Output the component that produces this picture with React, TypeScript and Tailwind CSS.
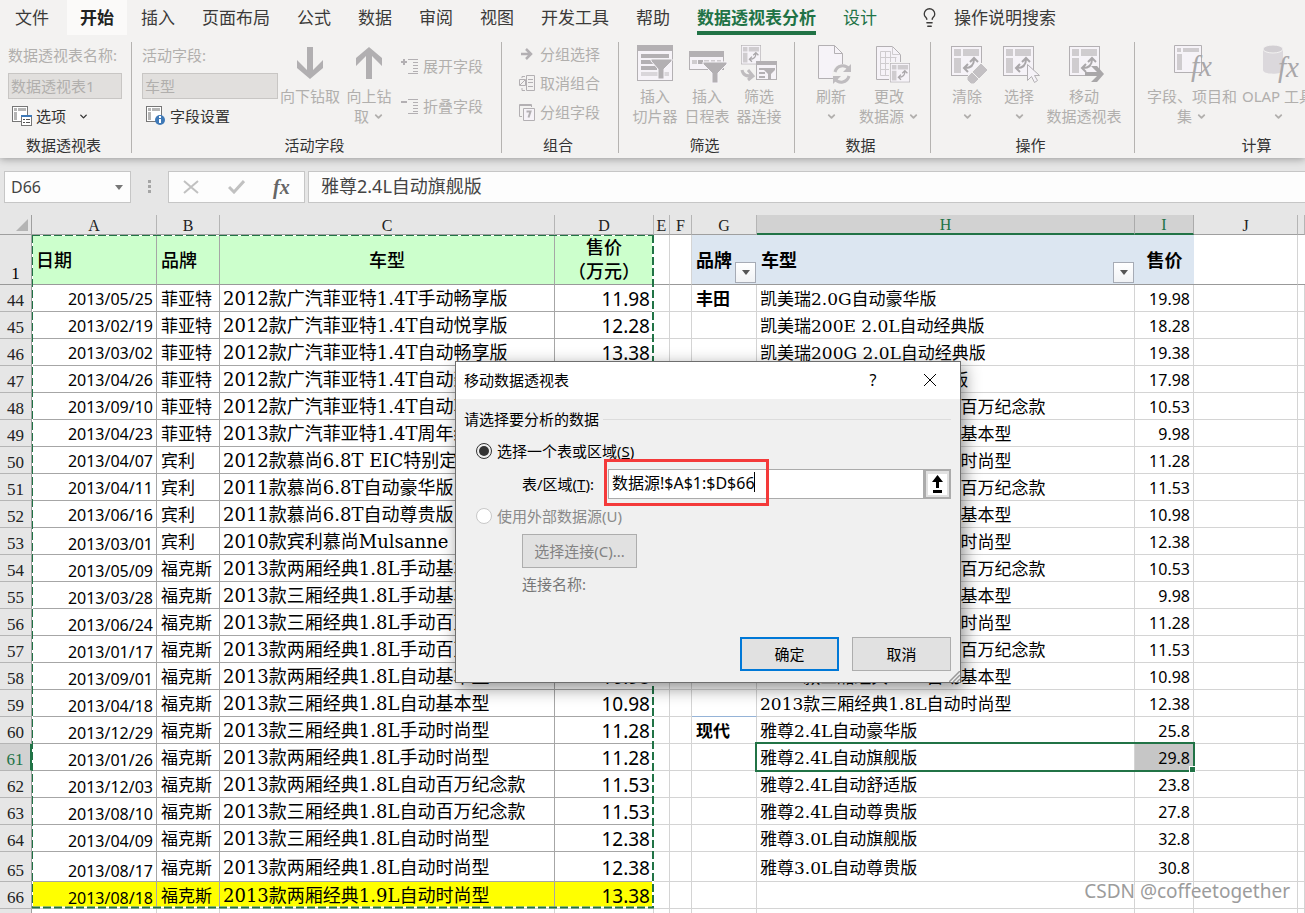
import type { ReactNode } from 'react';
import { ChevronDown, Lightbulb } from 'lucide-react';
import clsx from 'clsx';

const TABS = ['文件', '开始', '插入', '页面布局', '公式', '数据', '审阅', '视图', '开发工具', '帮助', '数据透视表分析', '设计'];

type Row = {
  no: number;
  date: string;
  brand: string;
  model: string;
  price: string;
  group?: string;
  item: string;
  sum: string;
};

const ROWS: Row[] = [
  { no: 44, date: '2013/05/25', brand: '菲亚特', model: '2012款广汽菲亚特1.4T手动畅享版', price: '11.98', group: '丰田', item: '凯美瑞2.0G自动豪华版', sum: '19.98' },
  { no: 45, date: '2013/02/19', brand: '菲亚特', model: '2012款广汽菲亚特1.4T自动悦享版', price: '12.28', item: '凯美瑞200E 2.0L自动经典版', sum: '18.28' },
  { no: 46, date: '2013/03/02', brand: '菲亚特', model: '2012款广汽菲亚特1.4T自动畅享版', price: '13.38', item: '凯美瑞200G 2.0L自动经典版', sum: '19.38' },
  { no: 47, date: '2013/04/26', brand: '菲亚特', model: '2012款广汽菲亚特1.4T自动劲享版', price: '14.28', item: '凯美瑞2.0L自动真皮导航版', sum: '17.98' },
  { no: 48, date: '2013/09/10', brand: '菲亚特', model: '2012款广汽菲亚特1.4T自动享乐版', price: '15.58', item: '2013款两厢经典1.8L手动百万纪念款', sum: '10.53' },
  { no: 49, date: '2013/04/23', brand: '菲亚特', model: '2013款广汽菲亚特1.4T周年纪念版', price: '13.38', item: '2013款两厢经典1.8L手动基本型', sum: '9.98' },
  { no: 50, date: '2013/04/07', brand: '宾利', model: '2012款慕尚6.8T EIC特别定制版', price: '598', item: '2013款两厢经典1.8L手动时尚型', sum: '11.28' },
  { no: 51, date: '2013/04/11', brand: '宾利', model: '2011款慕尚6.8T自动豪华版', price: '548', item: '2013款两厢经典1.8L自动百万纪念款', sum: '11.53' },
  { no: 52, date: '2013/06/16', brand: '宾利', model: '2011款慕尚6.8T自动尊贵版', price: '568', item: '2013款两厢经典1.8L自动基本型', sum: '10.98' },
  { no: 53, date: '2013/03/01', brand: '宾利', model: '2010款宾利慕尚Mulsanne 758', price: '758', item: '2013款两厢经典1.8L自动时尚型', sum: '12.38' },
  { no: 54, date: '2013/05/09', brand: '福克斯', model: '2013款两厢经典1.8L手动基本型', price: '9.98', item: '2013款三厢经典1.8L手动百万纪念款', sum: '10.53' },
  { no: 55, date: '2013/03/28', brand: '福克斯', model: '2013款三厢经典1.8L手动基本型', price: '9.98', item: '2013款三厢经典1.8L手动基本型', sum: '9.98' },
  { no: 56, date: '2013/06/24', brand: '福克斯', model: '2013款三厢经典1.8L手动百万纪念款', price: '10.53', item: '2013款三厢经典1.8L手动时尚型', sum: '11.28' },
  { no: 57, date: '2013/01/17', brand: '福克斯', model: '2013款两厢经典1.8L手动百万纪念款', price: '10.53', item: '2013款三厢经典1.8L自动百万纪念款', sum: '11.53' },
  { no: 58, date: '2013/09/01', brand: '福克斯', model: '2013款两厢经典1.8L自动基本型', price: '10.98', item: '2013款三厢经典1.8L自动基本型', sum: '10.98' },
  { no: 59, date: '2013/04/18', brand: '福克斯', model: '2013款三厢经典1.8L自动基本型', price: '10.98', item: '2013款三厢经典1.8L自动时尚型', sum: '12.38' },
  { no: 60, date: '2013/12/29', brand: '福克斯', model: '2013款三厢经典1.8L手动时尚型', price: '11.28', group: '现代', item: '雅尊2.4L自动豪华版', sum: '25.8' },
  { no: 61, date: '2013/01/26', brand: '福克斯', model: '2013款两厢经典1.8L手动时尚型', price: '11.28', item: '雅尊2.4L自动旗舰版', sum: '29.8' },
  { no: 62, date: '2013/12/03', brand: '福克斯', model: '2013款两厢经典1.8L自动百万纪念款', price: '11.53', item: '雅尊2.4L自动舒适版', sum: '23.8' },
  { no: 63, date: '2013/08/10', brand: '福克斯', model: '2013款三厢经典1.8L自动百万纪念款', price: '11.53', item: '雅尊2.4L自动尊贵版', sum: '27.8' },
  { no: 64, date: '2013/04/09', brand: '福克斯', model: '2013款三厢经典1.8L自动时尚型', price: '12.38', item: '雅尊3.0L自动旗舰版', sum: '32.8' },
  { no: 65, date: '2013/08/17', brand: '福克斯', model: '2013款两厢经典1.8L自动时尚型', price: '12.38', item: '雅尊3.0L自动尊贵版', sum: '30.8' },
  { no: 66, date: '2013/08/18', brand: '福克斯', model: '2013款两厢经典1.9L自动时尚型', price: '13.38', item: '', sum: '' },
];

const SERIF = "font-['DejaVu_Serif','Noto_Sans_CJK_SC',serif]";
const HEAD = "font-['Liberation_Serif','Noto_Sans_CJK_SC',serif]";

/* ================= ICONS ================= */

function Pivot({ x = 0, y = 0, size = 31 }: { x?: number; y?: number; size?: number }) {
  return (
    <svg x={x} y={y} width={size} height={size} viewBox="0 0 31 31" fill="none">
      <rect x="0.5" y="0.5" width="30" height="29" fill="#f6f3f8" stroke="#b3b0b3" />
      <path d="M3 3h7v7H3zM12 3h16v7H12zM3 12h7v15H3z" fill="#cfcccf" />
      <path d="M14 22c6 0 9-3 9-9M19 16l4-4 4 4M17 18l-4 4 4 4" stroke="#aaa7aa" strokeWidth="2" />
    </svg>
  );
}

function Fx({ x, y }: { x: number; y: number }) {
  return (
    <text x={x} y={y} fontSize="29" fontStyle="italic" fill="#a9a7a9" fontFamily="Liberation Serif, serif">
      fx
    </text>
  );
}

function Big({ children, w = 40 }: { children: ReactNode; w?: number }) {
  return (
    <svg width={w} height="40" viewBox={`0 0 ${w} 40`} fill="none" className="overflow-visible">
      {children}
    </svg>
  );
}

const ArrowDownIcon = (
  <Big>
    <path d="M17 3h6v23l10-10v8L20 35 7 24v-8l10 10z" fill="#b1afb1" />
  </Big>
);
const ArrowUpIcon = (
  <Big>
    <path d="M17 35h6V12l10 10v-8L20 3 7 14v8l10-10z" fill="#b1afb1" />
  </Big>
);
const SlicerIcon = (
  <Big>
    <rect x="2.5" y="1.5" width="35" height="35" fill="#f6f3f8" stroke="#b3b0b3" />
    <path d="M2 1h36v6H2z" fill="#b3b0b3" />
    <path d="M6 10h28v4H6zM6 16h14v4H6zM6 22h16v4H6z" fill="#b3b0b3" />
    <path d="M6 28h28v4H6z" fill="#d9d6da" />
    <path d="M16 15h21v2l-8 8v10h-6V25l-7-8z" fill="#b3b0b3" stroke="#f6f3f8" />
  </Big>
);
const TimelineIcon = (
  <Big>
    <rect x="2.5" y="7.5" width="34" height="18" fill="#f6f3f8" stroke="#b3b0b3" />
    <path d="M2 7h35v6H2z" fill="#b3b0b3" />
    <path d="M5 16h5v4H5zM17 16h5v4h-5zM24 16h4v4h-4zM30 16h4v4h-4z" fill="#cfcccf" />
    <path d="M11 16h5v4h-5z" fill="#b3b0b3" />
    <path d="M16 18h24v2l-9 9v10h-6V29l-9-9z" fill="#b3b0b3" stroke="#f6f3f8" />
  </Big>
);
const ConnectIcon = (
  <Big>
    <Pivot x={2} y={1} size={20} />
    <rect x="17.5" y="17.5" width="20" height="18" fill="#f6f3f8" stroke="#b3b0b3" />
    <path d="M17 17h21v4H17zM20 24h8v2h-8zM20 28h6v2h-6zM20 32h6v2h-6z" fill="#b3b0b3" />
    <path d="M25 24h11v2l-4 4v5h-3v-5l-4-4z" fill="#b3b0b3" />
    <path d="M3 26c1 6 5 6 11 6M9 26l5 6-5 4" stroke="#bfbcbf" strokeWidth="3" />
  </Big>
);
const RefreshIcon = (
  <Big>
    <path d="M7.5 1.5h16l8 8v25h-24z" fill="#f6f3f8" stroke="#b3b0b3" />
    <path d="M23.5 1.5v8h8" stroke="#b3b0b3" />
    <circle cx="31" cy="30" r="10" fill="#f3f2f1" />
    <path d="M24 28c2-7 10-8 14-3M38 32c-2 7-10 8-14 3" stroke="#bfbcbf" strokeWidth="3" />
    <path d="M40 20v8h-8zM22 40v-8h8z" fill="#bfbcbf" />
  </Big>
);
const SourceIcon = (
  <Big>
    <path d="M7.5 2.5h16l8 8v25h-24z" fill="#f6f3f8" stroke="#b3b0b3" />
    <path d="M23.5 2.5v8h8M11.5 7.5h10v24h-10zM11.5 13.5h16M11.5 19.5h16M11.5 25.5h16M16.5 7.5v24M21.5 7.5v24M26.5 13v10" stroke="#cfcccf" />
    <path d="M20 18h21v21H20z" fill="#f3f2f1" />
    <Pivot x={21} y={19} size={20} />
  </Big>
);
const ClearIcon = (
  <Big>
    <Pivot x={4} y={2} />
    <path d="M20 33l14-14 7 7-14 14h-3l-4-4z" fill="#c3c0c3" stroke="#f3f2f1" />
    <path d="M25 28l7 7" stroke="#f3f2f1" />
  </Big>
);
const SelectIcon = (
  <Big>
    <Pivot x={4} y={2} />
    <path d="M28.5 20.5v16l4-4 3 6 3-2-3-5h5z" fill="#f6f3f8" stroke="#b3b0b3" />
  </Big>
);
const MoveIcon = (
  <Big>
    <Pivot x={5} y={2} />
    <path d="M21 28h12l-6-6h6l7 8-7 8h-6l6-6H21z" fill="#a9a7a9" />
  </Big>
);
const FieldsIcon = (
  <Big>
    <path d="M2.5 1.5h27v27h-27z" fill="#f6f3f8" stroke="#b3b0b3" />
    <path d="M5 4h4v4H5zM11 4h16v4H11zM5 10h5v16H5z" fill="#cfcccf" />
    <Fx x={19} y={32} />
  </Big>
);
const OlapIcon = (
  <Big>
    <path d="M5 5v21c0 5 20 5 20 0V5z" fill="#dbd8dc" />
    <ellipse cx="15" cy="5" rx="10" ry="4" fill="#d2cfd3" stroke="#f3f2f1" />
    <Fx x={20} y={33} />
  </Big>
);

function OptionsIcon({ info }: { info?: boolean }) {
  return (
    <svg width="20" height="20" viewBox="0 0 20 20" fill="none">
      <rect x="0.5" y="0.5" width="15" height="15" fill="#fff" stroke="#767676" />
      <path d="M2 2h3v3H2zM6 2h8v3H6zM2 6h3v8H2z" fill="#b5b5b5" />
      {info ? (
        <>
          <circle cx="14" cy="14" r="5" fill="#3f79b7" />
          <path d="M13 13h2v4h-2zM13 10h2v2h-2z" fill="#fff" />
        </>
      ) : (
        <>
          <rect x="9.5" y="9.5" width="10" height="10" fill="#fff" stroke="#767676" />
          <path d="M9 9h11v2H9z" fill="#3f79b7" />
          <path d="M11 13h2v1h-2zM14 13h4v1h-4zM11 16h2v1h-2zM14 16h4v1h-4z" fill="#555" />
        </>
      )}
    </svg>
  );
}

function FieldIcon({ plus }: { plus?: boolean }) {
  return (
    <svg width="18" height="17" viewBox="0 0 18 17" fill="none" stroke="#b3b0b3">
      <path d={plus ? 'M0 4h6M3 1v6' : 'M0 4h6'} strokeWidth="2" />
      <path d="M7 1.5h10M12 4.5h5M12 7.5h5M12 10.5h5M12 13.5h5M7 15.5h10" />
    </svg>
  );
}

/* ================= RIBBON ================= */

function Group({ label, className, children }: { label: string; className?: string; children: ReactNode }) {
  return (
    <section className={clsx('flex shrink-0 flex-col justify-between border-r border-[#b5b3b1]', className)}>
      <div className="flex h-[91px] items-start">{children}</div>
      <h2 className="h-5 pr-1 text-center leading-6 text-[#333]">{label}</h2>
    </section>
  );
}

function BigButton({ icon, lines, menu, className }: { icon: ReactNode; lines: string[]; menu?: boolean; className?: string }) {
  return (
    <button disabled className={clsx('flex shrink-0 flex-col items-center leading-5 whitespace-nowrap text-[#b1afad]', className)}>
      <span className="pt-0.5 pb-0.5">{icon}</span>
      <span>{lines[0]}</span>
      <span className="flex h-5 items-center gap-1">
        {lines[1]}
        {menu && <ChevronDown size={11} strokeWidth={4} />}
      </span>
    </button>
  );
}

function SmallButton({ icon, text }: { icon: ReactNode; text: string }) {
  return (
    <button disabled className="flex items-center gap-1 leading-5 whitespace-nowrap text-[#b1afad]">
      <span className="flex w-[18px] justify-center">{icon}</span>
      {text}
    </button>
  );
}

function Ribbon() {
  return (
    <header className="relative z-10 h-[158px] shrink-0 bg-[#f3f2f1] text-[15px] shadow-[0_1px_8px_rgba(0,0,0,0.35)]">
      <nav className="flex h-[35px] gap-px pl-0.5 text-[17px] text-[#3b3a39]">
        {TABS.map((t) => (
          <button
            key={t}
            className={clsx(
              'h-[35px] shrink-0 px-[13px] whitespace-nowrap',
              t === '文件' && 'mr-1',
              t === '开始' && 'bg-[#fbfaf9] font-bold text-[#222]',
              t === '设计' && 'text-[#217346]',
              t === '数据透视表分析' && 'font-bold text-[#217346]',
            )}
          >
            <span className={clsx('flex h-[35px] items-center', t === '数据透视表分析' && 'border-b-4 border-[#217346] pt-1')}>{t}</span>
          </button>
        ))}
        <label className="ml-7 flex items-center gap-3.5">
          <Lightbulb size={21} strokeWidth={1.5} />
          <input readOnly value="操作说明搜索" className="w-32 bg-transparent outline-none" />
        </label>
      </nav>

      <div className="flex h-[118px] overflow-hidden pt-[7px]">
        <Group label="数据透视表" className="w-[132px]">
          <div className="flex flex-col pl-2">
            <label htmlFor="pivot-name" className="pt-[3px] leading-5 whitespace-nowrap text-[#b1afad]">数据透视表名称:</label>
            <input id="pivot-name" disabled defaultValue="数据透视表1" className="mt-2 h-[26px] w-[114px] border border-[#c8c6c4] bg-[#e1dfdd] px-0.5 pb-0.5 text-[#b1afad]" />
            <button className="mt-[5px] flex items-center gap-1 pl-1 leading-6 text-[#333]">
              <OptionsIcon /> 选项 <ChevronDown size={11} strokeWidth={3} className="ml-2" />
            </button>
          </div>
        </Group>

        <Group label="活动字段" className="w-[370px]">
          <div className="flex w-[148px] shrink-0 flex-col pl-2.5">
            <label htmlFor="active-field" className="pt-[3px] leading-5 text-[#b1afad]">活动字段:</label>
            <input id="active-field" disabled defaultValue="车型" className="mt-2 h-[26px] w-[136px] border border-[#c8c6c4] bg-[#e1dfdd] px-0.5 pb-0.5 text-[#b1afad]" />
            <button className="mt-[5px] flex items-center gap-1 pl-1 leading-6 text-[#333]">
              <OptionsIcon info /> 字段设置
            </button>
          </div>
          <BigButton icon={ArrowDownIcon} lines={['向下钻取', '']} className="w-[60px]" />
          <BigButton icon={ArrowUpIcon} lines={['向上钻', '取']} menu className="w-[58px]" />
          <div className="flex flex-col gap-5 pt-3.5 pl-[3px]">
            <SmallButton icon={<FieldIcon plus />} text="展开字段" />
            <SmallButton icon={<FieldIcon />} text="折叠字段" />
          </div>
        </Group>

        <Group label="组合" className="w-[117px]">
          <div className="flex flex-col gap-[9px] pt-0.5 pl-4">
            <SmallButton
              icon={
                <svg width="12" height="12" viewBox="0 0 12 12" fill="none" stroke="#b3b0b3" strokeWidth="2.5">
                  <path d="M0 6h10M5 1l5 5-5 5" />
                </svg>
              }
              text="分组选择"
            />
            <SmallButton
              icon={
                <svg width="16" height="17" viewBox="0 0 16 17" fill="none" stroke="#b3b0b3">
                  <path d="M7.5 0.5h8v15h-8zM9 4.5h5M9 7.5h5M9 11.5h5M3 3V1.5h3M3 13v2.5h3M0.5 4.5h6v6h-6zM1 10l5-5" />
                </svg>
              }
              text="取消组合"
            />
            <SmallButton
              icon={
                <svg width="16" height="17" viewBox="0 0 16 17" fill="none" stroke="#b3b0b3">
                  <path d="M3 12.5H0.5v-12h12V3M0 1.5h12" />
                  <path d="M4.5 4.5h11v12h-11z" fill="#f6f3f8" />
                  <path d="M7.5 7.5h4l-2 6" strokeWidth="2" />
                </svg>
              }
              text="分组字段"
            />
          </div>
        </Group>

        <Group label="筛选" className="w-[176px]">
          <BigButton icon={SlicerIcon} lines={['插入', '切片器']} className="ml-[10px] w-[52px]" />
          <BigButton icon={TimelineIcon} lines={['插入', '日程表']} className="w-[52px]" />
          <BigButton icon={ConnectIcon} lines={['筛选', '器连接']} className="w-[52px]" />
        </Group>

        <Group label="数据" className="w-[136px]">
          <BigButton icon={RefreshIcon} lines={['刷新', '']} menu className="ml-[10px] w-[52px]" />
          <BigButton icon={SourceIcon} lines={['更改', '数据源']} menu className="w-[64px]" />
        </Group>

        <Group label="操作" className="w-[204px]">
          <BigButton icon={ClearIcon} lines={['清除', '']} menu className="ml-[10px] w-[52px]" />
          <BigButton icon={SelectIcon} lines={['选择', '']} menu className="w-[52px]" />
          <BigButton icon={MoveIcon} lines={['移动', '数据透视表']} className="w-[78px]" />
        </Group>

        <Group label="计算" className="w-[248px]">
          <BigButton icon={FieldsIcon} lines={['字段、项目和', '集']} menu className="ml-[11px] w-[92px]" />
          <BigButton icon={OlapIcon} lines={['OLAP 工具', '']} menu className="w-[80px]" />
        </Group>
      </div>
    </header>
  );
}

function FormulaBar() {
  return (
    <div className="flex h-[57px] shrink-0 items-start bg-[#e6e6e6] pt-[13px] pl-1 text-[#444]">
      <label className="flex h-8 w-[127px] shrink-0 items-center border border-[#c6c6c6] bg-[#fdfdfd] pr-[7px] pl-1.5 text-base">
        <input readOnly value="D66" aria-label="名称框" className="min-w-0 flex-1 outline-none" />
        <svg width="8" height="5" viewBox="0 0 8 5" fill="#777"><path d="M0 0h8L4 5z" /></svg>
      </label>
      <svg width="37" height="32" viewBox="0 0 37 32" fill="#a5a5a5"><path d="M17 9h3v3h-3zM17 14h3v3h-3zM17 19h3v3h-3z" /></svg>
      <div className="flex h-8 w-[137px] shrink-0 items-center justify-around border border-[#c6c6c6] bg-[#fdfdfd]">
        <button disabled aria-label="取消输入">
          <svg width="16" height="14" viewBox="0 0 16 14" fill="none" stroke="#c1c1c1" strokeWidth="2"><path d="M1 1l14 12M15 1L1 13" /></svg>
        </button>
        <button disabled aria-label="输入">
          <svg width="17" height="14" viewBox="0 0 17 14" fill="none" stroke="#c1c1c1" strokeWidth="3"><path d="M1 7l5 5L16 1" /></svg>
        </button>
        <button className="font-['Liberation_Serif',serif] text-xl leading-6 font-bold text-[#666] italic">fx</button>
      </div>
      <input readOnly value="雅尊2.4L自动旗舰版" aria-label="编辑栏" className="ml-[3px] h-8 min-w-0 flex-1 border border-r-0 border-[#c6c6c6] bg-[#fdfdfd] px-3 pb-1 text-lg outline-none" />
    </div>
  );
}

/* ================= SHEET ================= */

function ColHead({ name, on }: { name: string; on?: boolean }) {
  return (
    <th
      className={clsx(
        'h-5 border-r pt-0.5 text-base leading-4 font-normal align-bottom',
        HEAD,
        on ? 'border-r-[#ababab] border-b-2 border-b-[#217346] bg-[#d2d2d2] text-[#217346]' : 'border-r-[#b5b5b5] border-b border-b-[#9f9f9f] bg-[#e6e6e6] text-[#222]',
      )}
    >
      {name}
    </th>
  );
}

function FilterButton() {
  return (
    <button aria-label="筛选" className="absolute right-px bottom-px flex size-[21px] items-center justify-center border border-[#a6abb5] bg-linear-to-b from-white to-[#f0f2f5]">
      <svg width="8" height="5" viewBox="0 0 8 5" fill="#555"><path d="M0 0h8L4 5z" /></svg>
    </button>
  );
}

function Sheet() {
  return (
    <main className="relative min-h-0 flex-1 overflow-hidden bg-white">
      <table className="w-full table-fixed border-separate border-spacing-0 whitespace-nowrap text-black">
        <colgroup>
          <col className="w-8" />
          <col className="w-[125px]" />
          <col className="w-[63px]" />
          <col className="w-[335px]" />
          <col className="w-[99px]" />
          <col className="w-4" />
          <col className="w-[22px]" />
          <col className="w-[65px]" />
          <col className="w-[378px]" />
          <col className="w-[59px]" />
          <col className="w-[104px]" />
          <col />
        </colgroup>
        <thead>
          <tr>
            <th className="h-5 border-r border-b border-[#9f9f9f] bg-[#e6e6e6] p-0">
              <svg width="12" height="12" viewBox="0 0 12 12" fill="#b4b4b4" className="ml-4"><path d="M12 0v12H0z" /></svg>
            </th>
            {['A', 'B', 'C', 'D', 'E', 'F', 'G'].map((c) => (
              <ColHead key={c} name={c} />
            ))}
            <ColHead name="H" on />
            <ColHead name="I" on />
            <ColHead name="J" />
            <ColHead name="" />
          </tr>
        </thead>
        <tbody>
          <tr className={clsx('text-lg leading-6 font-medium *:h-[50px] *:border-b *:border-b-[#999]', HEAD)}>
            <th scope="row" className="border-r border-r-[#9f9f9f] bg-[#e6e6e6] text-[17px] leading-5 font-normal align-bottom">1</th>
            <td className="border-r border-r-[#a6a6a6] bg-[#ccffcc] pt-0.5 pl-1">日期</td>
            <td className="border-r border-r-[#a6a6a6] bg-[#ccffcc] pt-0.5 pl-1">品牌</td>
            <td className="border-r border-r-[#a6a6a6] bg-[#ccffcc] pt-0.5 text-center">车型</td>
            <td className="border-r border-r-[#a6a6a6] bg-[#ccffcc] pt-px text-center">售价<br />（万元）</td>
            <td className="border-r border-r-[#d4d4d4]" />
            <td className="border-r border-r-[#d4d4d4]" />
            <td className="relative bg-[#dce6f1] pt-0.5 pl-1 font-bold">品牌<FilterButton /></td>
            <td className="relative bg-[#dce6f1] pt-0.5 pl-1 font-bold">车型<FilterButton /></td>
            <td className="bg-[#dce6f1] pt-0.5 text-center font-bold">售价</td>
            <td className="border-r border-r-[#d4d4d4]" />
            <td />
          </tr>
          {ROWS.map((r) => {
            const src = clsx('border-r border-b border-[#a6a6a6]', r.no === 66 && 'bg-[#ffff00]');
            const pivot = 'border-r border-b border-[#d4d4d4]';
            return (
              <tr key={r.no} className={clsx('leading-5', r.no === 65 ? 'h-[30px]' : 'h-[27px]')}>
                <th
                  scope="row"
                  className={clsx(
                    'border-b border-b-[#b5b5b5] text-[17px] font-normal align-bottom',
                    HEAD,
                    r.no === 61 ? 'border-r-2 border-r-[#217346] bg-[#d2d2d2] text-[#217346]' : 'border-r border-r-[#9f9f9f] bg-[#e6e6e6] text-[#222]',
                  )}
                >
                  {r.no}
                </th>
                <td className={clsx(src, 'pr-[3px] text-right text-base leading-5', r.no >= 53 ? 'align-bottom' : 'pt-0.5')}>{r.date}</td>
                <td className={clsx(src, 'pt-0.5 pl-1 text-[17px]', SERIF)}>{r.brand}</td>
                <td className={clsx(src, 'overflow-hidden pt-0.5 pl-[3px] text-lg leading-5', SERIF)}>{r.model}</td>
                <td className={clsx(src, 'pt-0.5 pr-[3px] text-right text-[19px]')}>{r.price}</td>
                <td className={pivot} />
                <td className={pivot} />
                <td className={clsx(pivot, 'pt-0.5 pl-1 text-[17px] font-bold', r.no === 59 && 'border-b-[#95b3d7]', SERIF)}>{r.group}</td>
                <td className={clsx(pivot, 'pt-0.5 pl-[3px] text-[17px]', SERIF)}>{r.item}</td>
                <td className={clsx(pivot, 'pt-0.5 pr-[3px] text-right text-base leading-5', r.no === 61 && 'bg-[#c6c6c6]')}>{r.sum}</td>
                <td className={pivot} />
                <td className={pivot} />
              </tr>
            );
          })}
          <tr className="h-[27px]">
            <th scope="row" className="border-r border-[#9f9f9f] bg-[#e6e6e6]" />
            {['A', 'B', 'C', 'D', 'E', 'F', 'G', 'H', 'I', 'J', 'K'].map((c) => (
              <td key={c} className="border-r border-b border-[#d4d4d4]" />
            ))}
          </tr>
        </tbody>
      </table>

      {/* Marching ants around the copied range */}
      <svg className="pointer-events-none absolute top-[19px] left-[31px]" width="624" height="676" viewBox="0 0 624 676" fill="none">
        <path d="M1 1.5h621M1.5 1v673" stroke="#fff" />
        <path d="M1 1.5h621M1.5 1v673" stroke="#217346" strokeDasharray="8 3" />
        <path d="M622 1v672M1 673.5h622" stroke="#fff" strokeWidth="2" />
        <path d="M622 1v672M1 673.5h622" stroke="#217346" strokeWidth="2" strokeDasharray="8 3" />
      </svg>

      {/* Active selection */}
      <div className="pointer-events-none absolute top-[527px] left-[755px] h-[30px] w-[440px] border-2 border-[#217346]">
        <div className="absolute -right-[3px] -bottom-[3px] size-[7px] border border-white bg-[#217346]" />
      </div>
    </main>
  );
}

/* ================= DIALOG ================= */

function MoveDialog() {
  return (
    <div
      role="dialog"
      aria-labelledby="dialog-title"
      className="absolute top-[361px] left-[455px] z-20 w-[506px] border border-[#6e6e6e] bg-[#f0f0f0] text-[15px] leading-5 text-black shadow-[3px_5px_16px_rgba(0,0,0,0.45)]"
    >
      <div className="flex h-[37px] items-center bg-white pr-[23px] pb-0.5 pl-2">
        <h1 id="dialog-title" className="flex-1">移动数据透视表</h1>
        <button className="w-4 text-base">?</button>
        <button aria-label="关闭" className="ml-[42px]">
          <svg width="14" height="14" viewBox="0 0 14 14" fill="none" stroke="#000"><path d="M1 1l12 12M13 1L1 13" /></svg>
        </button>
      </div>

      <div className="pt-2.5 pr-[9px] pb-[11px] pl-2">
        <div className="flex items-center gap-1">
          请选择要分析的数据
          <span className="h-px flex-1 bg-[#dcdcdc]" />
        </div>

        <label className="mt-3 ml-3 flex items-center gap-1">
          <input type="radio" name="source" defaultChecked className="size-4 appearance-none rounded-full border border-[#333] bg-white p-0.5 checked:bg-[#333] checked:bg-clip-content" />
          <span className="pl-px">选择一个表或区域(<u>S</u>)</span>
        </label>

        <div className="relative mt-2 flex h-[30px] items-center">
          <label htmlFor="range" className="w-36 shrink-0 pl-[58px]">表/区域(<u>T</u>):</label>
          <input id="range" readOnly value="数据源!$A$1:$D$66" className="h-[30px] min-w-0 flex-1 border border-[#ababab] bg-white px-[3px] pb-1 text-base outline-none" />
          <button aria-label="折叠对话框" className="flex h-[30px] w-[27px] items-center justify-center border-2 border-[#ababab] bg-[#e1e1e1]">
            <svg width="19" height="21" viewBox="0 0 19 21"><path d="M0 0h19v21H0z" fill="#fff" /><path d="M9.5 1L15 8h-4v6H8V8H4zM5 16h9v3H5z" /></svg>
          </button>
          <span className="absolute top-[3px] left-[290px] h-5 w-px bg-black" />
          <span className="absolute -top-[10px] left-[140px] h-[47px] w-[165px] border-[3px] border-[#f43a3a]" />
        </div>

        <label className="mt-[7px] ml-3 flex items-center gap-1 text-[#8a8a8a]">
          <input type="radio" name="source" disabled className="size-4 appearance-none rounded-full border border-[#c8c8c8] bg-white" />
          <span className="pl-px">使用外部数据源(U)</span>
        </label>

        <button disabled className="mt-2 ml-[58px] h-[34px] w-[115px] border border-[#adadad] bg-[#e1e1e1] text-[#838383]">选择连接(C)...</button>
        <p className="mt-1.5 ml-[58px] text-[#777]">连接名称:</p>

        <div className="mt-[43px] flex justify-end gap-[13px]">
          <button className="h-[34px] w-[99px] border-2 border-[#0078d7] bg-[#e1e1e1]">确定</button>
          <button className="h-[34px] w-[99px] border border-[#adadad] bg-[#e1e1e1]">取消</button>
        </div>
      </div>

      <svg className="absolute right-0 bottom-0" width="11" height="11" viewBox="0 0 11 11" fill="none" stroke="#9a9a9a" strokeWidth="1.5">
        <path d="M0 11L11 0M4 11l7-7M8 11l3-3" />
      </svg>
    </div>
  );
}

export default function App() {
  return (
    <div className="relative flex h-screen flex-col overflow-hidden bg-white font-['Noto_Sans','Noto_Sans_CJK_SC',sans-serif]">
      <Ribbon />
      <FormulaBar />
      <Sheet />
      <MoveDialog />
      <p className="absolute right-[15px] bottom-2 text-[19px] leading-7 text-[#9c9c9c] [text-shadow:1px_1px_0_#fff]">CSDN @coffeetogether</p>
    </div>
  );
}
